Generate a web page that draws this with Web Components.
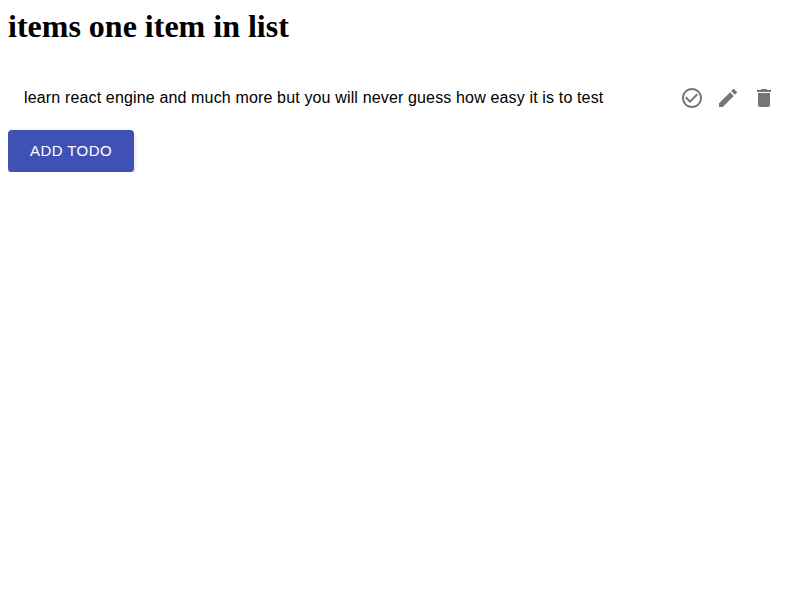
<!DOCTYPE html>
<html lang="en">
<head>
<meta charset="utf-8">
<title>Todo</title>
<style>
body { margin: 8px; background: #fff; color: #000; font-family: "Liberation Serif", serif; }
</style>
</head>
<body>
<todo-app></todo-app>
<script>
const define = (name, html) => {
  const template = document.createElement('template');
  template.innerHTML = html;
  customElements.define(name, class extends HTMLElement {
    constructor() {
      super();
      this.attachShadow({ mode: 'open' }).append(template.content.cloneNode(true));
    }
  });
};

define('icon-button', `
<style>
:host { display: inline-flex; }
button { display: flex; padding: 6px; border: 0; border-radius: 50%; background: none; color: rgba(0,0,0,.54); cursor: pointer; }
::slotted(svg) { width: 24px; height: 24px; fill: currentColor; display: block; }
</style>
<button type="button"><slot></slot></button>`);

define('todo-item', `
<style>
:host { display: flex; align-items: center; justify-content: space-between; box-sizing: border-box; height: 48px; padding: 0 10px 0 16px; font: 400 16px/24px "Liberation Sans", Arial, sans-serif; letter-spacing: .00938em; }
.actions { display: flex; }
</style>
<span><slot></slot></span>
<div class="actions"><slot name="actions"></slot></div>`);

define('contained-button', `
<style>
:host { display: block; }
button { display: block; box-sizing: border-box; min-width: 64px; padding: 8px 22px; border: 0; border-radius: 4px; background: #3f51b5; color: #fff; font: 500 15px/1.75 "Liberation Sans", Arial, sans-serif; letter-spacing: .02857em; text-transform: uppercase; box-shadow: 0 3px 1px -2px rgba(0,0,0,.2), 0 2px 2px 0 rgba(0,0,0,.14), 0 1px 5px 0 rgba(0,0,0,.12); cursor: pointer; }
</style>
<button type="button"><slot></slot></button>`);

define('todo-app', `
<style>
:host { display: block; }
h1 { margin: 0 0 29px; font-size: 32px; line-height: 37px; font-weight: 700; }
contained-button { margin-top: 8px; }
</style>
<h1>items one item in list</h1>
<todo-item>learn react engine and much more but you will never guess how easy it is to test
  <icon-button slot="actions"><svg viewBox="0 0 24 24"><path d="M16.59 7.58 10 14.17l-3.59-3.58L5 12l5 5 8-8zM12 2C6.48 2 2 6.48 2 12s4.48 10 10 10 10-4.48 10-10S17.52 2 12 2zm0 18c-4.42 0-8-3.58-8-8s3.58-8 8-8 8 3.58 8 8-3.58 8-8 8z"/></svg></icon-button>
  <icon-button slot="actions"><svg viewBox="0 0 24 24"><path d="M3 17.25V21h3.75L17.81 9.94l-3.75-3.75L3 17.25zM20.71 7.04c.39-.39.39-1.02 0-1.41l-2.34-2.34a.9959.9959 0 0 0-1.41 0l-1.83 1.83 3.75 3.75 1.83-1.83z"/></svg></icon-button>
  <icon-button slot="actions"><svg viewBox="0 0 24 24"><path d="M6 19c0 1.1.9 2 2 2h8c1.1 0 2-.9 2-2V7H6v12zM19 4h-3.5l-1-1h-5l-1 1H5v2h14V4z"/></svg></icon-button>
</todo-item>
<contained-button>Add Todo</contained-button>`);
</script>
</body>
</html>
